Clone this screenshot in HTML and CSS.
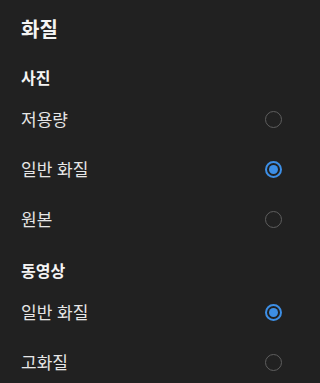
FILE: index.html
```html
<!DOCTYPE html>
<html lang="ko">
<head>
<meta charset="utf-8">
<link rel="stylesheet" href="styles.css">
</head>
<body>
<div class="sheet">
  <h1 class="title">화질</h1>
  <section class="group">
    <h2 class="group-label">사진</h2>
    <div class="option"><span class="option-text">저용량</span><span class="radio"></span></div>
    <div class="option"><span class="option-text">일반 화질</span><span class="radio checked"></span></div>
    <div class="option"><span class="option-text">원본</span><span class="radio"></span></div>
  </section>
  <section class="group">
    <h2 class="group-label">동영상</h2>
    <div class="option"><span class="option-text">일반 화질</span><span class="radio checked"></span></div>
    <div class="option"><span class="option-text">고화질</span><span class="radio"></span></div>
  </section>
</div>
</body>
</html>
```
FILE: styles.css
```css
html, body {
  margin: 0;
  padding: 0;
  background: #212121;
  height: 100%;
  overflow: hidden;
}
.sheet {
  box-sizing: border-box;
  width: 300px;
  font-family: "Noto Sans CJK KR", "Noto Sans", sans-serif;
  color: #ececec;
  padding: 16px 18px 0 21px;
}
.title {
  margin: 0 0 9px;
  font-size: 20px;
  line-height: 26px;
  font-weight: 700;
  color: #f4f4f4;
}
.group-label {
  margin: 0;
  padding: 16px 0 7px;
  font-size: 16px;
  line-height: 20px;
  font-weight: 700;
  color: #f4f4f4;
}
.option {
  display: flex;
  align-items: center;
  justify-content: space-between;
  height: 50px;
}
.option-text {
  font-size: 17px;
  line-height: 20px;
  color: #e6e6e6;
}
.radio {
  box-sizing: border-box;
  width: 17px;
  height: 17px;
  border-radius: 50%;
  border: 1.5px solid #5e5e5e;
  display: flex;
  align-items: center;
  justify-content: center;
}
.radio.checked {
  border: 2px solid #3d8fe6;
}
.radio.checked::after {
  content: "";
  width: 9px;
  height: 9px;
  border-radius: 50%;
  background: #3d8fe6;
}
```
